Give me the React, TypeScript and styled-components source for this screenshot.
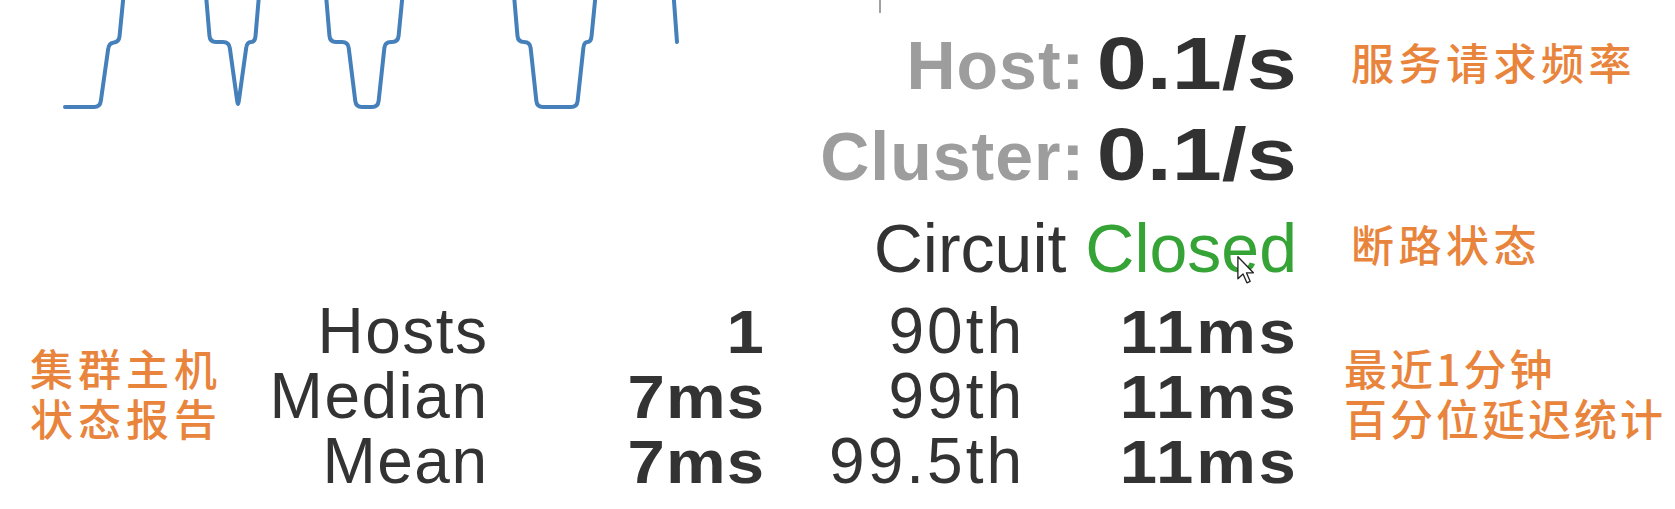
import React from "react";
import styled, { createGlobalStyle } from "styled-components";

const GlobalStyle = createGlobalStyle`
  html, body { margin: 0; padding: 0; background: #ffffff; }
  body { font-family: "Liberation Sans", Arial, sans-serif; }
`;

const Page = styled.div`
  position: relative;
  width: 1675px;
  height: 509px;
  background: #ffffff;
  overflow: hidden;
`;

const TopGrid = styled.section`
  display: grid;
  grid-template-columns: 700px 597px 1fr;
  grid-template-rows: 22px 91px 91px 95px;
`;

const ChartCell = styled.div`
  grid-column: 1;
  grid-row: 1 / span 4;
  align-self: start;
`;

const Tick = styled.div`
  grid-column: 2;
  grid-row: 1;
  align-self: start;
  width: 2px;
  height: 13px;
  margin-left: 179px;
  background: #a0a0a0;
`;

const StatLine = styled.div<{ $row: number; $size: number; $pad: number }>`
  grid-column: 2;
  grid-row: ${(p) => p.$row};
  align-self: start;
  padding-top: ${(p) => p.$pad}px;
  text-align: right;
  font-size: ${(p) => p.$size}px;
  line-height: 1;
  white-space: nowrap;
`;

const RateLabel = styled.span`
  font-size: 68px;
  font-weight: 700;
  letter-spacing: 1px;
  color: #9d9d9d;
`;

/* bold figures in the dashboard are drawn wider than Arial Bold */
const Wide = styled.span<{ $x: number; $size?: number; $spacing?: number }>`
  display: inline-block;
  font-weight: 700;
  ${(p) => (p.$size ? `font-size: ${p.$size}px;` : "")}
  letter-spacing: ${(p) => p.$spacing ?? 0}px;
  margin-right: ${(p) => -(p.$spacing ?? 0)}px;
  transform: scaleX(${(p) => p.$x});
  transform-origin: 100% 50%;
`;

const RateValue = styled(Wide)`
  color: #323232;
  margin-left: 45px;
`;

const CircuitLabel = styled.span`
  color: #333333;
`;

const CircuitState = styled.span<{ $open?: boolean }>`
  color: ${(p) => (p.$open ? "#d9534f" : "#35a335")};
`;

const Note = styled.div<{ $row: number; $pad: number }>`
  grid-column: 3;
  grid-row: ${(p) => p.$row};
  align-self: start;
  padding-top: ${(p) => p.$pad}px;
  padding-left: 54px;
  font-family: "Noto Sans CJK SC", "Noto Sans", sans-serif;
  font-weight: 500;
  font-size: 43px;
  line-height: 1;
  letter-spacing: 4.5px;
  color: #e8843c;
  white-space: nowrap;
`;

const Table = styled.section`
  display: grid;
  grid-template-columns: 250px 237px 277px 258px 274px 1fr;
  grid-auto-rows: 65px;
  font-size: 64px;
  line-height: 65px;
  color: #333333;
`;

const Label = styled.div<{ $col: number; $row: number; $spacing: number }>`
  grid-column: ${(p) => p.$col};
  grid-row: ${(p) => p.$row};
  text-align: right;
  letter-spacing: ${(p) => p.$spacing}px;
  margin-right: ${(p) => -p.$spacing}px;
  white-space: nowrap;
`;

const Value = styled.div<{ $col: number; $row: number }>`
  grid-column: ${(p) => p.$col};
  grid-row: ${(p) => p.$row};
  text-align: right;
  white-space: nowrap;
`;

const SideNote = styled.div<{ $col: number; $pad: number; $spacing: number }>`
  grid-column: ${(p) => p.$col};
  grid-row: 1 / span 3;
  align-self: center;
  padding-left: ${(p) => p.$pad}px;
  padding-bottom: 10px;
  font-family: "Noto Sans CJK SC", "Noto Sans", sans-serif;
  font-weight: 500;
  font-size: 43px;
  line-height: 50px;
  letter-spacing: ${(p) => p.$spacing}px;
  color: #e8843c;
  white-space: nowrap;
`;

const Cursor = styled.svg`
  position: absolute;
  left: 1237px;
  top: 256px;
  width: 18px;
  height: 28px;
`;

type Pt = [number, number];

const roundedPath = (pts: Pt[], r: number) => {
  let d = `M ${pts[0][0]} ${pts[0][1]}`;
  for (let i = 1; i < pts.length - 1; i++) {
    const [px, py] = pts[i - 1];
    const [x, y] = pts[i];
    const [nx, ny] = pts[i + 1];
    const l1 = Math.hypot(x - px, y - py);
    const l2 = Math.hypot(nx - x, ny - y);
    const r1 = Math.min(r, l1 / 2);
    const r2 = Math.min(r, l2 / 2);
    const ax = x - ((x - px) / l1) * r1;
    const ay = y - ((y - py) / l1) * r1;
    const bx = x + ((nx - x) / l2) * r2;
    const by = y + ((ny - y) / l2) * r2;
    d += ` L ${ax.toFixed(2)} ${ay.toFixed(2)} Q ${x} ${y} ${bx.toFixed(2)} ${by.toFixed(2)}`;
  }
  const last = pts[pts.length - 1];
  d += ` L ${last[0]} ${last[1]}`;
  return d;
};

const wave: Pt[] = [
  [65, 107], [100, 107], [109, 43], [119, 42], [127, -40],
  [203, -40], [210, 42], [229, 42], [238, 107], [247, 42], [255, 42], [262, -40],
  [323, -40], [330, 42], [348, 42], [356, 107], [378, 107], [385, 42], [398, 42], [406, -40],
  [511, -40], [518, 42], [530, 42], [537, 107], [577, 107], [584, 42], [591, 42], [599, -40],
  [671, -40], [677, 42],
];

const WaveChart = () => (
  <svg width="700" height="115" viewBox="0 0 700 115" style={{ display: "block" }}>
    <path
      d={roundedPath(wave, 6)}
      fill="none"
      stroke="#4580bb"
      strokeWidth={4}
      strokeLinejoin="round"
      strokeLinecap="round"
    />
  </svg>
);

const rows = [
  { label: "Hosts", value: "1", pLabel: "90th", pValue: "11ms" },
  { label: "Median", value: "7ms", pLabel: "99th", pValue: "11ms" },
  { label: "Mean", value: "7ms", pLabel: "99.5th", pValue: "11ms" },
];

export default function App() {
  return (
    <Page>
      <GlobalStyle />
      <TopGrid>
        <ChartCell>
          <WaveChart />
        </ChartCell>
        <Tick />
        <StatLine $row={2} $size={75} $pad={4}>
          <RateLabel>Host:</RateLabel>
          <RateValue $x={1.2}>0.1/s</RateValue>
        </StatLine>
        <Note $row={2} $pad={18}>服务请求频率</Note>
        <StatLine $row={3} $size={75} $pad={4}>
          <RateLabel>Cluster:</RateLabel>
          <RateValue $x={1.2}>0.1/s</RateValue>
        </StatLine>
        <StatLine $row={4} $size={68} $pad={10}>
          <CircuitLabel>Circuit</CircuitLabel> <CircuitState>Closed</CircuitState>
        </StatLine>
        <Note $row={4} $pad={18}>断路状态</Note>
      </TopGrid>
      <Table>
        <SideNote $col={1} $pad={30} $spacing={5}>
          集群主机
          <br />
          状态报告
        </SideNote>
        {rows.map((r, i) => (
          <React.Fragment key={r.label}>
            <Label $col={2} $row={i + 1} $spacing={1.5}>{r.label}</Label>
            <Value $col={3} $row={i + 1}>
              <Wide $x={1.1} $size={61} $spacing={1}>{r.value}</Wide>
            </Value>
            <Label $col={4} $row={i + 1} $spacing={3}>{r.pLabel}</Label>
            <Value $col={5} $row={i + 1}>
              <Wide $x={1.1} $size={61} $spacing={2.5}>{r.pValue}</Wide>
            </Value>
          </React.Fragment>
        ))}
        <SideNote $col={6} $pad={48} $spacing={3}>
          最近1分钟
          <br />
          百分位延迟统计
        </SideNote>
      </Table>
      <Cursor viewBox="0 0 12 19">
        <path
          d="M0.5 0.5 L0.5 15.5 L4 12.2 L6.6 18.2 L8.8 17.2 L6.3 11.4 L11 11.4 Z"
          fill="#ffffff"
          stroke="#222222"
          strokeWidth={0.9}
          strokeLinejoin="round"
        />
      </Cursor>
    </Page>
  );
}
